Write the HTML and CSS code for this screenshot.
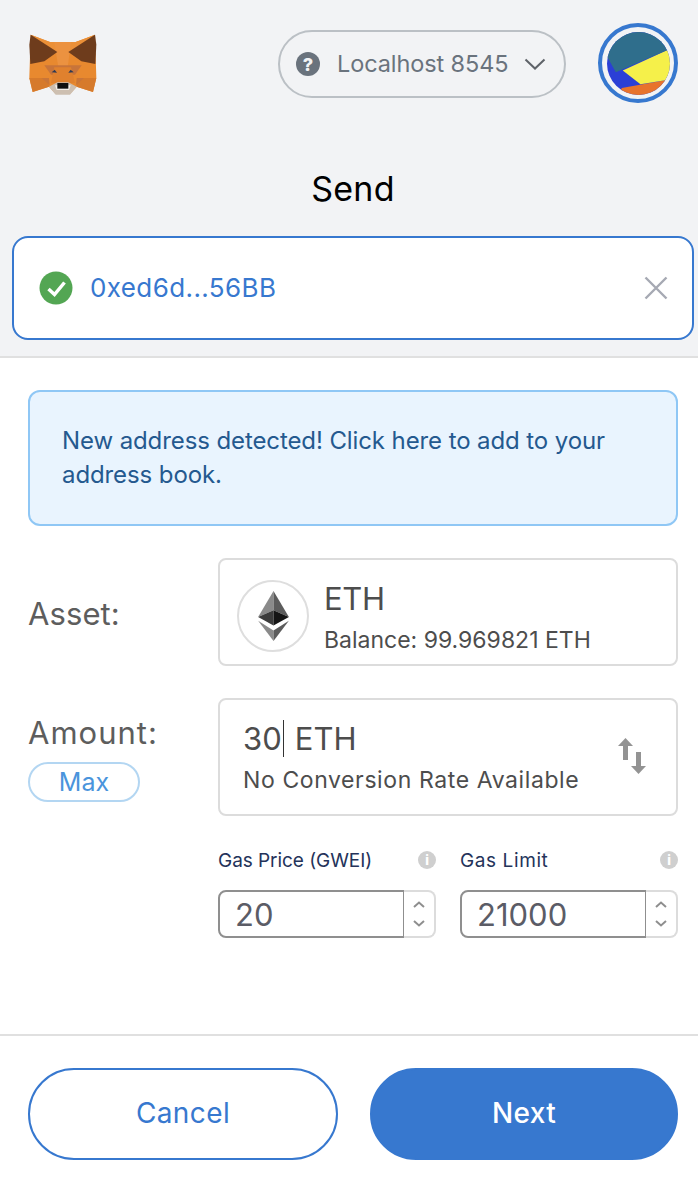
FILE: index.html
```html
<!DOCTYPE html>
<html lang="en">
<head>
<meta charset="utf-8">
<title>Send</title>
<link rel="stylesheet" href="styles.css">
</head>
<body>
<div class="app">
  <div class="top">
    <header class="header">
      <svg class="fox" viewBox="0 0 225 216" aria-hidden="true">
        <polygon fill="#e8892f" points="17,20 75,42 152,42 210,20 214,150 204,192 155,176 135,198 92,198 72,176 23,192 13,150"/>
        <polygon fill="#d67a2c" points="13,150 70,150 72,176 23,192"/>
        <polygon fill="#d67a2c" points="214,150 157,150 155,176 204,192"/>
        <polygon fill="#c97538" points="50,150 72,150 74,172"/>
        <polygon fill="#c97538" points="177,150 155,150 153,172"/>
        <polygon fill="#eb9038" points="17,20 75,42 152,42 210,20 130,72 97,72"/>
        <polygon fill="#ec9240" points="88,42 138,42 128,118 100,118"/>
        <polygon fill="#c8743a" points="58,112 170,112 150,140 78,140"/>
        <polygon fill="#e0812e" points="88,118 138,118 150,165 127,165 100,165 78,165"/>
        <polygon fill="#6e3c1c" points="17,20 97,72 58,100 16,108 13,50"/>
        <polygon fill="#6e3c1c" points="210,20 130,72 169,100 211,108 214,50"/>
        <polygon fill="#2e3a55" points="80,133 89,125 96,134"/>
        <polygon fill="#2e3a55" points="146,133 137,125 130,134"/>
        <polygon fill="#cdbfb1" points="72,176 97,163 130,163 155,176 135,200 92,200"/>
        <polygon fill="#f4efe9" points="90,172 137,172 132,186 95,186"/>
        <polygon fill="#111" points="97,165 130,165 130,182 97,182"/>
      </svg>
      <div class="network">
        <span class="network-dot">?</span>
        <span class="network-name">Localhost 8545</span>
        <svg class="chevron" viewBox="0 0 22 12" aria-hidden="true"><path d="M1.5 1.5 11 10.5 20.5 1.5" fill="none" stroke="#5f6369" stroke-width="2"/></svg>
      </div>
      <div class="avatar">
        <svg viewBox="0 0 64 64" aria-hidden="true">
          <defs><clipPath id="disc"><circle cx="32" cy="32" r="32"/></clipPath></defs>
          <g clip-path="url(#disc)">
            <rect width="64" height="64" fill="#2b3fd6"/>
            <polygon fill="#e8732c" points="15,57 59,49 70,70 10,70"/>
            <polygon fill="#f5f04a" points="16,39 62,18 70,45 59,49 34,53"/>
            <polygon fill="#2f6e8c" points="-2,20 0,25 9,41 62,18 50,-5 0,-5"/>
          </g>
        </svg>
      </div>
    </header>
    <h1 class="title">Send</h1>
    <div class="address">
      <svg class="check" viewBox="0 0 34 34" aria-hidden="true"><circle cx="17" cy="17" r="16.5" fill="#53a653"/><path d="M9.500 18 15.500 23.500 25.500 11.500" fill="none" stroke="#fff" stroke-width="3.500"/></svg>
      <span class="address-text">0xed6d...56BB</span>
      <svg class="close" viewBox="0 0 24 24" aria-hidden="true"><path d="M1.5 1.5 22.5 22.5M22.5 1.5 1.5 22.5" fill="none" stroke="#a6a9b3" stroke-width="2.4"/></svg>
    </div>
  </div>

  <main class="form">
    <div class="notice">New address detected! Click here to add to your address book.</div>

    <div class="row">
      <div class="label-col"><span class="label label-asset">Asset:</span></div>
      <div class="box asset">
        <div class="token">
          <svg viewBox="0 0 32 52" aria-hidden="true">
            <polygon fill="#8a8a8a" points="16,0 0,27 16,20"/>
            <polygon fill="#5c5c5c" points="16,0 32,27 16,20"/>
            <polygon fill="#3c3c3c" points="16,20 0,27 16,36"/>
            <polygon fill="#151515" points="16,20 32,27 16,36"/>
            <polygon fill="#8a8a8a" points="0,31 16,52 16,41"/>
            <polygon fill="#5c5c5c" points="32,31 16,52 16,41"/>
          </svg>
        </div>
        <div class="asset-text">
          <div class="big">ETH</div>
          <div class="small">Balance: 99.969821 ETH</div>
        </div>
      </div>
    </div>

    <div class="row amount-row">
      <div class="label-col">
        <span class="label label-amount">Amount:</span>
        <span class="max">Max</span>
      </div>
      <div class="box amount">
        <div class="amount-text">
          <div class="big"><span class="caret">30</span> ETH</div>
          <div class="small">No Conversion Rate Available</div>
        </div>
        <svg class="swap" viewBox="0 0 28 36" aria-hidden="true">
          <path d="M7.500 0 15 8H10V22H5V8H0Z" fill="#939393"/>
          <path d="M20.500 36 13 28H18V14H23V28H28Z" fill="#939393"/>
        </svg>
      </div>
    </div>

    <div class="gas">
      <div class="gas-field">
        <div class="gas-label"><span>Gas Price (GWEI)</span><span class="info">i</span></div>
        <div class="stepper">
          <div class="stepper-value">20</div>
          <div class="stepper-arrows">
            <svg viewBox="0 0 12 7" aria-hidden="true"><path d="M1 6 6 1.500 11 6" fill="none" stroke="#8e8e8e" stroke-width="2"/></svg>
            <svg viewBox="0 0 12 7" aria-hidden="true"><path d="M1 1 6 5.500 11 1" fill="none" stroke="#8e8e8e" stroke-width="2"/></svg>
          </div>
        </div>
      </div>
      <div class="gas-field">
        <div class="gas-label"><span class="gas-limit">Gas Limit</span><span class="info">i</span></div>
        <div class="stepper">
          <div class="stepper-value">21000</div>
          <div class="stepper-arrows">
            <svg viewBox="0 0 12 7" aria-hidden="true"><path d="M1 6 6 1.500 11 6" fill="none" stroke="#8e8e8e" stroke-width="2"/></svg>
            <svg viewBox="0 0 12 7" aria-hidden="true"><path d="M1 1 6 5.500 11 1" fill="none" stroke="#8e8e8e" stroke-width="2"/></svg>
          </div>
        </div>
      </div>
    </div>
  </main>

  <footer class="footer">
    <button class="btn btn-cancel" type="button">Cancel</button>
    <button class="btn btn-next" type="button">Next</button>
  </footer>
</div>
</body>
</html>
```
FILE: styles.css
```css
* { box-sizing: border-box; }
html, body { margin: 0; padding: 0; background: #fff; }
body { font-family: "Inter", "Liberation Sans", sans-serif; color: #4d4d4d; }
.app { width: 698px; height: 1184px; display: flex; flex-direction: column; overflow: hidden; }

.top { background: #f2f3f5; border-bottom: 2px solid #e0e0e0; height: 358px; padding: 0 4px 0 12px; }
.header { display: flex; align-items: center; height: 128px; padding-left: 13px; }
.fox { width: 75px; height: 72px; flex: none; margin-right: 178px; }
.network { width: 288px; height: 68px; flex: none; border: 2px solid #bbc0c5; border-radius: 34px; display: flex; align-items: center; padding-left: 16px; color: #6a737d; font-size: 23.5px; }
.network-dot { width: 24px; height: 24px; border-radius: 50%; background: #6a737d; color: #f2f3f5; font-size: 18px; font-weight: 800; display: flex; align-items: center; justify-content: center; margin-right: 17px; }
.network-name { white-space: nowrap; letter-spacing: -.1px; margin-bottom: 2px; }
.chevron { width: 22px; height: 12px; margin-left: auto; margin-right: 18px; }
.avatar { width: 80px; height: 80px; flex: none; margin-left: 32px; margin-top: -2px; border: 4px solid #3778cf; border-radius: 50%; padding: 4.5px; }
.avatar svg { display: block; width: 63px; height: 63px; }

.title { margin: 0; height: 108px; padding-top: 40px; font-size: 34px; line-height: 42px; font-weight: 400; color: #000; text-align: center; letter-spacing: .3px; }

.address { height: 104px; border: 2px solid #3778cf; border-radius: 16px; background: #fff; display: flex; align-items: center; padding: 0 24px 0 25px; }
.check { width: 34px; height: 34px; flex: none; margin-right: 17px; }
.address-text { font-size: 26px; color: #3778cf; letter-spacing: .4px; margin-bottom: 2px; }
.close { width: 24px; height: 24px; margin-left: auto; flex: none; }

.form { flex: 1; padding: 32px 20px 0 28px; }
.notice { height: 136px; background: #e9f4fe; border: 2px solid #8fc7f5; border-radius: 12px; padding: 32px; font-size: 24px; line-height: 34px; color: #24598f; letter-spacing: -.1px; }

.row { display: flex; margin-top: 32px; }
.label-col { width: 190px; flex: none; display: flex; flex-direction: column; align-items: flex-start; justify-content: center; }
.label { font-size: 31px; line-height: 36px; color: #5d5d5d; }
.label-asset { margin-top: 4px; letter-spacing: .1px; }
.label-amount { letter-spacing: 1px; }
.box { width: 460px; border: 2px solid #dcdcdc; border-radius: 8px; display: flex; align-items: center; }
.asset { height: 108px; padding-left: 17px; }
.token { width: 72px; height: 72px; border: 2px solid #dedede; border-radius: 50%; flex: none; display: flex; align-items: center; justify-content: center; margin: 8px 15px 0 0; }
.token svg { width: 31px; height: 50px; }
.big { font-size: 31px; line-height: 40px; color: #4d4d4d; letter-spacing: -.3px; }
.small { font-size: 23px; line-height: 30px; color: #4d4d4d; margin-top: 6px; }
.asset-text { margin-top: 10px; }

.amount-row .label-col { justify-content: flex-start; padding-top: 17px; }
.max { width: 112px; height: 40px; margin-top: 11px; border: 2px solid #b3d6f2; border-radius: 20px; display: flex; align-items: center; justify-content: center; color: #4a94dc; font-size: 25px; }
.amount { height: 118px; padding: 0 30px 0 23px; justify-content: space-between; }
.amount .big { letter-spacing: .1px; }
.amount .small { letter-spacing: .6px; }
.caret { border-right: 1px solid #333; padding-right: 1px; margin-right: 2px; }
.swap { width: 28px; height: 36px; flex: none; margin-top: -3px; }

.gas { display: flex; gap: 24px; margin: 32px 0 0 190px; width: 460px; }
.gas-field { width: 218px; }
.gas-label { height: 24px; display: flex; align-items: center; justify-content: space-between; font-size: 19px; color: #24335a; margin-bottom: 18px; letter-spacing: -.05px; }
.gas-limit { letter-spacing: .6px; }
.info { width: 18px; height: 18px; border-radius: 50%; background: #cfcfcf; color: #fff; font-size: 13px; font-weight: 800; display: flex; align-items: center; justify-content: center; }
.stepper { height: 48px; display: flex; }
.stepper-value { width: 186px; border: 2px solid #8f8f8f; border-right-width: 1px; border-radius: 8px 0 0 8px; padding-left: 15px; font-size: 31px; line-height: 46px; color: #5b5c66; }
.stepper-arrows { flex: 1; border: 2px solid #dcdcdc; border-left: 0; border-radius: 0 8px 8px 0; display: flex; flex-direction: column; align-items: center; justify-content: center; gap: 12px; }
.stepper-arrows svg { width: 12px; height: 7px; display: block; }

.footer { height: 150px; border-top: 2px solid #e0e0e0; padding: 32px 20px 0 28px; display: flex; gap: 32px; }
.btn { height: 92px; border-radius: 46px; font: inherit; font-size: 28px; letter-spacing: .4px; padding: 0 0 2px; }
.btn-cancel { width: 310px; background: #fff; border: 2px solid #3778cf; color: #3778cf; }
.btn-next { width: 308px; background: #3778cf; border: 2px solid #3778cf; color: #fff; font-weight: 500; }
```
